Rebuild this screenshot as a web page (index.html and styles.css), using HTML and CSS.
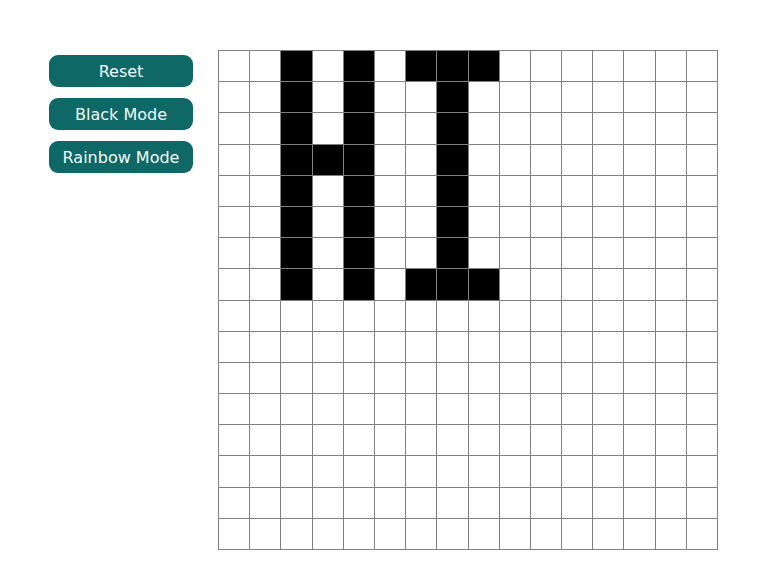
FILE: index.html
```html
<!DOCTYPE html>
<html>
<head>
<meta charset="utf-8">
<link rel="stylesheet" href="styles.css">
</head>
<body>
<div class="page">
  <div class="controls">
    <button class="btn">Reset</button>
    <button class="btn">Black Mode</button>
    <button class="btn">Rainbow Mode</button>
  </div>
  <div class="grid" id="grid"></div>
</div>
<script src="script.js"></script>
</body>
</html>
```
FILE: styles.css
```css
* { box-sizing: border-box; }
html, body { margin: 0; padding: 0; background: #ffffff; }
body { font-family: "DejaVu Sans", sans-serif; }
.page {
  display: flex;
  align-items: flex-start;
  padding: 50px 0 0 49px;
  gap: 25px;
}
.controls {
  display: flex;
  flex-direction: column;
  gap: 11px;
  padding-top: 5px;
}
.btn {
  width: 144px;
  height: 32px;
  border: none;
  border-radius: 9px;
  background: #0d6866;
  color: #f4faf9;
  font-family: "DejaVu Sans", sans-serif;
  font-size: 16px;
  padding: 1px 0 0;
  cursor: pointer;
}
.grid {
  width: 500px;
  height: 500px;
  display: grid;
  grid-template-columns: repeat(16, 1fr);
  grid-template-rows: repeat(16, 1fr);
  border-left: 1px solid #808080;
  border-top: 1px solid #808080;
}
.cell {
  border-right: 1px solid #808080;
  border-bottom: 1px solid #808080;
  background: #ffffff;
}
.cell.on { background: #000000; }
```
FILE: script.js
```js
var on = {
  0: [2,4,6,7,8],
  1: [2,4,7], 2: [2,4,7],
  3: [2,3,4,7],
  4: [2,4,7], 5: [2,4,7], 6: [2,4,7],
  7: [2,4,6,7,8]
};
var grid = document.getElementById('grid');
for (var r = 0; r < 16; r++) {
  for (var c = 0; c < 16; c++) {
    var d = document.createElement('div');
    d.className = 'cell' + (on[r] && on[r].indexOf(c) >= 0 ? ' on' : '');
    grid.appendChild(d);
  }
}
```
